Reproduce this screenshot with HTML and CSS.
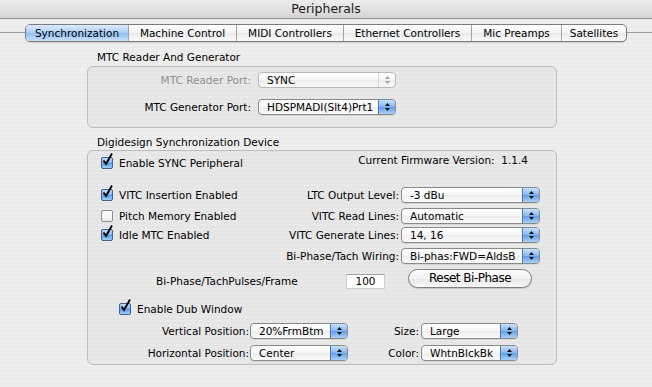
FILE: index.html
```html
<!DOCTYPE html>
<html lang="en">
<head>
    <meta charset="UTF-8">
    <title>Peripherals</title>
    <link rel="stylesheet" href="styles.css">
</head>
<body>
    <div class="window">
        <div class="titlebar">Peripherals</div>

        <!-- Tabs -->
        <div class="tabbar">
            <div class="tabs">
                <span class="tab selected">Synchronization</span>
                <span class="tab">Machine Control</span>
                <span class="tab">MIDI Controllers</span>
                <span class="tab">Ethernet Controllers</span>
                <span class="tab">Mic Preamps</span>
                <span class="tab">Satellites</span>
            </div>
        </div>

        <div class="content">
            <!-- MTC -->
            <div class="group-title first">MTC Reader And Generator</div>
            <div class="group mtc">
                <div class="field-row">
                    <span class="field-label disabled">MTC Reader Port:</span>
                    <div class="popup port disabled">
                        <span class="popup-text">SYNC</span>
                        <span class="popup-arrows"><svg width="9" height="12" viewBox="0 0 9 12"><polygon points="2,5 7,5 4.5,2" /><polygon points="2,7 7,7 4.5,10" /></svg></span>
                    </div>
                </div>
                <div class="field-row">
                    <span class="field-label">MTC Generator Port:</span>
                    <div class="popup port">
                        <span class="popup-text">HDSPMADI(Slt4)Prt1</span>
                        <span class="popup-arrows"><svg width="9" height="12" viewBox="0 0 9 12"><polygon points="2,5 7,5 4.5,2" /><polygon points="2,7 7,7 4.5,10" /></svg></span>
                    </div>
                </div>
            </div>

            <!-- SYNC device -->
            <div class="group-title second">Digidesign Synchronization Device</div>
            <div class="group sync">
                <div class="sync-head">
                    <label class="check">
                        <span class="box checked"><svg width="14" height="16" viewBox="0 0 14 16"><path d="M2.5 7.5 L5 11 L11 0.5" /></svg></span>
                        Enable SYNC Peripheral
                    </label>
                    <span class="firmware">Current Firmware Version:&nbsp; 1.1.4</span>
                </div>

                <div class="sync-grid">
                    <label class="check">
                        <span class="box checked"><svg width="14" height="16" viewBox="0 0 14 16"><path d="M2.5 7.5 L5 11 L11 0.5" /></svg></span>
                        VITC Insertion Enabled
                    </label>
                    <span class="field-label">LTC Output Level:</span>
                    <div class="popup">
                        <span class="popup-text">-3 dBu</span>
                        <span class="popup-arrows"><svg width="9" height="12" viewBox="0 0 9 12"><polygon points="2,5 7,5 4.5,2" /><polygon points="2,7 7,7 4.5,10" /></svg></span>
                    </div>

                    <label class="check">
                        <span class="box"></span>
                        Pitch Memory Enabled
                    </label>
                    <span class="field-label">VITC Read Lines:</span>
                    <div class="popup">
                        <span class="popup-text">Automatic</span>
                        <span class="popup-arrows"><svg width="9" height="12" viewBox="0 0 9 12"><polygon points="2,5 7,5 4.5,2" /><polygon points="2,7 7,7 4.5,10" /></svg></span>
                    </div>

                    <label class="check">
                        <span class="box checked"><svg width="14" height="16" viewBox="0 0 14 16"><path d="M2.5 7.5 L5 11 L11 0.5" /></svg></span>
                        Idle MTC Enabled
                    </label>
                    <span class="field-label">VITC Generate Lines:</span>
                    <div class="popup">
                        <span class="popup-text">14, 16</span>
                        <span class="popup-arrows"><svg width="9" height="12" viewBox="0 0 9 12"><polygon points="2,5 7,5 4.5,2" /><polygon points="2,7 7,7 4.5,10" /></svg></span>
                    </div>

                    <span></span>
                    <span class="field-label">Bi-Phase/Tach Wiring:</span>
                    <div class="popup">
                        <span class="popup-text">Bi-phas:FWD=AldsB</span>
                        <span class="popup-arrows"><svg width="9" height="12" viewBox="0 0 9 12"><polygon points="2,5 7,5 4.5,2" /><polygon points="2,7 7,7 4.5,10" /></svg></span>
                    </div>
                </div>

                <div class="pulses-row">
                    <span class="pulses-label">Bi-Phase/TachPulses/Frame</span>
                    <span class="textfield">100</span>
                    <button class="button">Reset Bi-Phase</button>
                </div>

                <!-- Dub window -->
                <label class="check dub-check">
                    <span class="box checked"><svg width="14" height="16" viewBox="0 0 14 16"><path d="M2.5 7.5 L5 11 L11 0.5" /></svg></span>
                    Enable Dub Window
                </label>
                <div class="dub-grid">
                    <span class="field-label">Vertical Position:</span>
                    <div class="popup">
                        <span class="popup-text">20%FrmBtm</span>
                        <span class="popup-arrows"><svg width="9" height="12" viewBox="0 0 9 12"><polygon points="2,5 7,5 4.5,2" /><polygon points="2,7 7,7 4.5,10" /></svg></span>
                    </div>
                    <span class="field-label">Size:</span>
                    <div class="popup">
                        <span class="popup-text">Large</span>
                        <span class="popup-arrows"><svg width="9" height="12" viewBox="0 0 9 12"><polygon points="2,5 7,5 4.5,2" /><polygon points="2,7 7,7 4.5,10" /></svg></span>
                    </div>

                    <span class="field-label">Horizontal Position:</span>
                    <div class="popup">
                        <span class="popup-text">Center</span>
                        <span class="popup-arrows"><svg width="9" height="12" viewBox="0 0 9 12"><polygon points="2,5 7,5 4.5,2" /><polygon points="2,7 7,7 4.5,10" /></svg></span>
                    </div>
                    <span class="field-label">Color:</span>
                    <div class="popup">
                        <span class="popup-text">WhtnBlckBk</span>
                        <span class="popup-arrows"><svg width="9" height="12" viewBox="0 0 9 12"><polygon points="2,5 7,5 4.5,2" /><polygon points="2,7 7,7 4.5,10" /></svg></span>
                    </div>
                </div>
            </div>
        </div>
    </div>
</body>
</html>
```

FILE: styles.css
```css
/* Reset */
* {
    margin: 0;
    padding: 0;
    box-sizing: border-box;
}

body {
    width: 652px;
    height: 387px;
    overflow: hidden;
    font-family: "DejaVu Sans", sans-serif;
    font-size: 10.5px;
    color: #000;
    background: #ececec;
}

/* Window with aqua pinstripes */
.window {
    height: 387px;
    background: repeating-linear-gradient(#eeeeee 0 2px, #ebebeb 2px 4px);
}

.titlebar {
    height: 19px;
    border-bottom: 1px solid #8e8e8e;
    background: linear-gradient(#ededed, #d5d5d5);
    text-align: center;
    font-size: 12.5px;
    line-height: 17px;
    color: #1a1a1a;
}

/* Tabs */
.tabbar {
    margin-top: 5px;
    height: 18px;
    background: linear-gradient(#9a9a9a, #9a9a9a) 0 8px / 100% 1px no-repeat;
}

.tabs {
    display: flex;
    width: 602px;
    height: 18px;
    margin-left: 25px;
    border: 1px solid #7c7c7c;
    border-radius: 5px;
    overflow: hidden;
    background: linear-gradient(#ffffff, #f4f4f4 50%, #e9e9e9 51%, #fbfbfb);
    box-shadow: 0 1px 1px rgba(0, 0, 0, 0.12);
}

.tab {
    border-left: 1px solid #a4a4a4;
    text-align: center;
    line-height: 16px;
    white-space: nowrap;
}

.tab:nth-child(1) { width: 102px; border-left: 0; }
.tab:nth-child(2) { width: 108px; }
.tab:nth-child(3) { width: 107px; }
.tab:nth-child(4) { width: 128px; }
.tab:nth-child(5) { width: 90px; }
.tab:nth-child(6) { flex: 1; }

.tab.selected {
    background: linear-gradient(#dcebfc, #abcef5 50%, #8ebdf1 51%, #c8e2fb);
}

/* Groups */
.content {
    padding-left: 87px;
    width: 557px;
}

.group-title {
    padding-left: 10px;
    height: 14px;
    line-height: 14px;
}

.group-title.first {
    margin-top: 8px;
    margin-bottom: 2px;
}

.group-title.second {
    margin-top: 7px;
    margin-bottom: 1px;
}

.group {
    border: 1px solid #bcbcbc;
    border-radius: 6px;
    background: rgba(0, 0, 0, 0.025);
}

.field-label {
    line-height: 16px;
    white-space: nowrap;
}

.field-label.disabled {
    color: #8f8f8f;
}

.mtc {
    height: 62px;
    padding-top: 5px;
}

.field-row {
    display: flex;
    align-items: center;
    height: 16px;
}

.field-row + .field-row {
    margin-top: 11px;
}

.mtc .field-label {
    width: 163px;
    margin-right: 7px;
    text-align: right;
}

/* Popup buttons */
.popup {
    display: flex;
    height: 16px;
    border: 1px solid #8a8a8a;
    border-radius: 4px;
    overflow: hidden;
    background: linear-gradient(#ffffff, #f7f7f7 50%, #ededed 51%, #fbfbfb);
    box-shadow: 0 1px 0 rgba(0, 0, 0, 0.08);
}

.popup.port {
    width: 138px;
}

.popup-text {
    flex: 1;
    padding-left: 8px;
    line-height: 14px;
    white-space: nowrap;
    overflow: hidden;
}

.popup-arrows {
    display: flex;
    align-items: center;
    justify-content: center;
    width: 17px;
    border-left: 1px solid #4f77ab;
    background: linear-gradient(#c8e1fb, #82b6ef 50%, #5e9de8 51%, #a9d1f8);
}

.popup-arrows polygon {
    fill: #111;
}

.popup.disabled {
    border-color: #b9b9b9;
    box-shadow: none;
}

.popup.disabled .popup-arrows {
    border-left: 1px solid #d6d6d6;
    background: none;
}

.popup.disabled .popup-arrows polygon {
    fill: #a0a0a0;
}

/* Checkboxes */
.check {
    display: flex;
    align-items: center;
    gap: 6px;
    height: 16px;
    white-space: nowrap;
}

.box {
    position: relative;
    flex: none;
    width: 12px;
    height: 12px;
    border: 1px solid #8b8b8b;
    border-radius: 2px;
    background: linear-gradient(#ffffff, #ececec);
}

.box.checked {
    border-color: #3f6396;
    background: linear-gradient(#c4defb, #78afee 50%, #5498e8 51%, #a4cef7);
}

.box svg {
    position: absolute;
    left: -1px;
    top: -5px;
    overflow: visible;
}

.box path {
    fill: none;
    stroke: #000;
    stroke-width: 1.8;
}

/* Sync device */
.sync {
    height: 215px;
    padding: 4px 16px 0 13px;
}

.sync-head {
    display: flex;
    justify-content: space-between;
    align-items: flex-start;
    padding-right: 12px;
}

.firmware {
    line-height: 14px;
    margin-top: -2px;
}

.sync-grid {
    display: grid;
    grid-template-columns: 1fr auto 139px;
    grid-template-rows: 21px 19px 21px 21px;
    column-gap: 2px;
    margin-top: 16px;
    align-items: start;
}

.sync-grid .field-label {
    justify-self: end;
}

.pulses-row {
    display: flex;
    align-items: flex-end;
    height: 19px;
    padding-left: 55px;
}

.pulses-label {
    width: 190px;
    line-height: 14px;
}

.textfield {
    width: 39px;
    height: 15px;
    margin-bottom: -1px;
    border: 1px solid #cdcdcd;
    border-top-color: #a0a0a0;
    background: #fff;
    text-align: center;
    line-height: 13px;
}

.button {
    width: 124px;
    height: 19px;
    margin-left: 23px;
    border: 1px solid #7e7e7e;
    border-radius: 10px;
    background: linear-gradient(#fdfdfd, #f3f3f3 50%, #e6e6e6 51%, #f9f9f9);
    box-shadow: 0 1px 1px rgba(0, 0, 0, 0.15);
    font-family: inherit;
    font-size: 12px;
    letter-spacing: -0.5px;
    line-height: 17px;
    color: #000;
}

/* Dub window */
.dub-check {
    margin-top: 13px;
    margin-left: 18px;
}

.dub-grid {
    display: grid;
    grid-template-columns: 149px 98px 73px 97px;
    grid-template-rows: 22px 22px;
    margin-top: 6px;
    align-items: start;
}

.dub-grid .field-label {
    text-align: right;
    padding-right: 1px;
}

.dub-grid .field-label:nth-child(3),
.dub-grid .field-label:nth-child(7) {
    padding-right: 2px;
}
```
